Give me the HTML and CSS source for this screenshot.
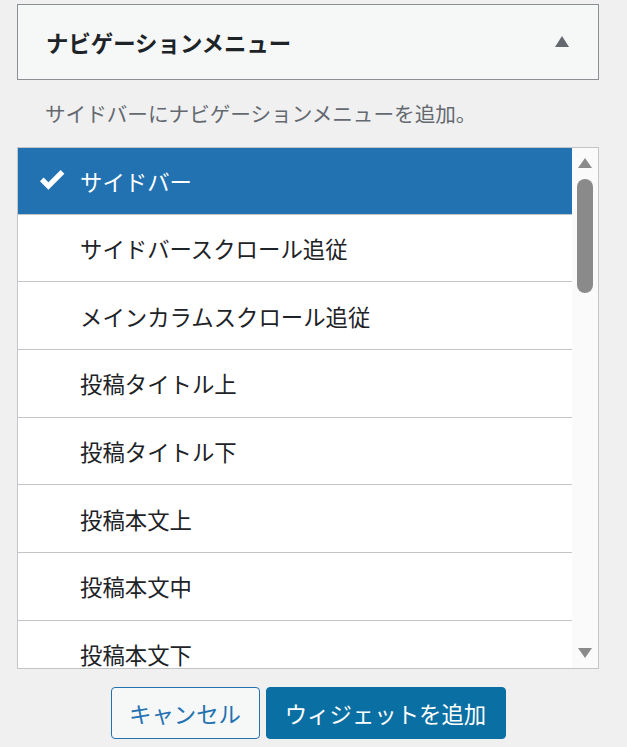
FILE: index.html
```html
<!DOCTYPE html>
<html lang="ja">
<head>
<meta charset="utf-8">
<title>ナビゲーションメニュー</title>
<link rel="stylesheet" href="styles.css">
</head>
<body>
<div class="panel">
  <div class="panel-head">
    <h2 class="panel-title">ナビゲーションメニュー</h2>
    <span class="toggle" aria-hidden="true"></span>
  </div>
  <p class="desc">サイドバーにナビゲーションメニューを追加。</p>
  <div class="listbox">
    <ul class="items">
      <li class="item selected">
        <span class="check"><svg viewBox="0 0 25 21" width="25" height="21"><path d="M0 11.2 L3.6 7.6 L8.4 12.3 L20.6 0 L24.4 3.7 L8.4 19.8 Z" fill="#fff"/></svg></span>
        <span class="label">サイドバー</span>
      </li>
      <li class="item"><span class="check"></span><span class="label">サイドバースクロール追従</span></li>
      <li class="item"><span class="check"></span><span class="label">メインカラムスクロール追従</span></li>
      <li class="item"><span class="check"></span><span class="label">投稿タイトル上</span></li>
      <li class="item"><span class="check"></span><span class="label">投稿タイトル下</span></li>
      <li class="item"><span class="check"></span><span class="label">投稿本文上</span></li>
      <li class="item"><span class="check"></span><span class="label">投稿本文中</span></li>
      <li class="item"><span class="check"></span><span class="label">投稿本文下</span></li>
    </ul>
    <div class="scrollbar" aria-hidden="true">
      <span class="arrow up"></span>
      <span class="thumb"></span>
      <span class="spacer"></span>
      <span class="arrow down"></span>
    </div>
  </div>
  <div class="actions">
    <button class="btn btn-secondary">キャンセル</button>
    <button class="btn btn-primary">ウィジェットを追加</button>
  </div>
</div>
</body>
</html>
```
FILE: styles.css
```css
html, body {
  margin: 0;
  padding: 0;
  background: #f0f0f1;
}
body {
  font-family: "Noto Sans CJK JP", "Noto Sans", sans-serif;
  color: #1d2327;
}
.panel {
  width: 582px;
  margin: 4px 0 0 17px;
}
.panel-head {
  box-sizing: border-box;
  height: 76px;
  border: 1px solid #8c8f94;
  background: #f6f7f7;
  display: flex;
  align-items: center;
  justify-content: space-between;
  padding: 0 29px 0 28px;
}
.panel-title {
  margin: 0;
  font-size: 22.4px;
  font-weight: 700;
  line-height: 30px;
  color: #1d2327;
}
.toggle {
  width: 0;
  height: 0;
  border-left: 7px solid transparent;
  border-right: 7px solid transparent;
  border-bottom: 11px solid #646970;
  margin-top: -2px;
}
.desc {
  margin: 18px 0 19px 28px;
  font-size: 20.6px;
  line-height: 30px;
  color: #646970;
}
.listbox {
  box-sizing: border-box;
  height: 522px;
  border: 1px solid #c3c4c7;
  background: #fff;
  display: flex;
  overflow: hidden;
}
.items {
  list-style: none;
  margin: 0;
  padding: 0;
  flex: 1;
  overflow: hidden;
}
.item {
  box-sizing: border-box;
  height: 67.67px;
  border-bottom: 1px solid #c3c4c7;
  display: flex;
  align-items: center;
  padding-left: 22px;
  font-size: 22.4px;
  line-height: 30px;
  color: #1d2327;
}
.item.selected {
  background: #2271b1;
  color: #fff;
  height: 66.67px;
  border-bottom-color: #c3c4c7;
}
.check {
  width: 25px;
  height: 21px;
  margin-right: 15px;
  display: flex;
}
.scrollbar {
  width: 26px;
  background: #fafafa;
  display: flex;
  flex-direction: column;
  align-items: center;
  padding: 10px 0;
  box-sizing: border-box;
}
.arrow {
  width: 0;
  height: 0;
  border-left: 7px solid transparent;
  border-right: 7px solid transparent;
}
.arrow.up {
  border-bottom: 10px solid #8a8a8a;
}
.arrow.down {
  border-top: 10px solid #8a8a8a;
}
.thumb {
  width: 16px;
  height: 114px;
  border-radius: 8px;
  background: #8a8a8a;
  margin-top: 11px;
}
.spacer {
  flex: 1;
}
.actions {
  display: flex;
  justify-content: center;
  gap: 6px;
  margin-top: 18px;
}
.btn {
  box-sizing: border-box;
  height: 52px;
  border-radius: 4px;
  font-family: "Noto Sans CJK JP", "Noto Sans", sans-serif;
  font-size: 22.4px;
  line-height: 30px;
  padding: 0;
  cursor: pointer;
}
.btn-secondary {
  width: 149px;
  border: 1px solid #2271b1;
  background: #f6f7f7;
  color: #2271b1;
}
.btn-primary {
  width: 240px;
  border: 1px solid #0a6fa2;
  background: #0a6fa2;
  color: #fff;
}
```
